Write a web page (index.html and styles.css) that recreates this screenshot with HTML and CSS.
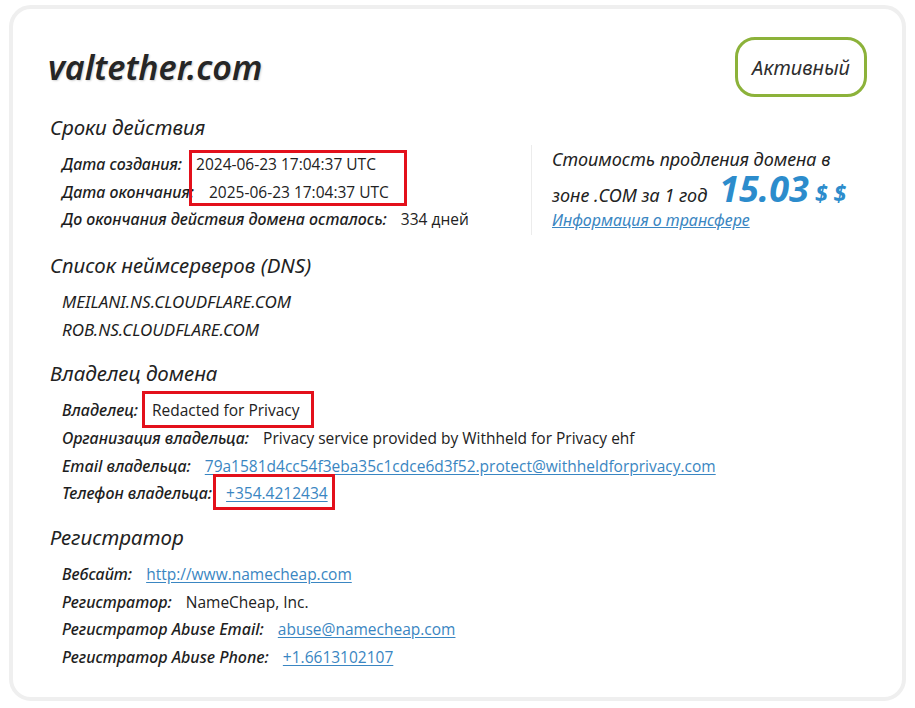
FILE: index.html
```html
<!DOCTYPE html>
<html lang="ru">
<head>
<meta charset="utf-8">
<title>valtether.com</title>
<link rel="stylesheet" href="styles.css">
</head>
<body>
<div class="wrap">
  <div class="card">
    <div class="head">
      <h1 class="domain">valtether.com</h1>
      <div class="badge">Активный</div>
    </div>

    <div class="sec sec-top">
      <div class="col-main">
        <h2 class="sec-title">Сроки действия</h2>
        <div class="rows">
          <div class="row"><span class="lbl">Дата создания:</span><span class="val">2024-06-23 17:04:37 UTC</span></div>
          <div class="row"><span class="lbl">Дата окончания:</span><span class="val val-shift">2025-06-23 17:04:37 UTC</span></div>
          <div class="row"><span class="lbl">До окончания действия домена осталось:</span><span class="val">334 дней</span></div>
          <div class="redbox redbox-dates"></div>
        </div>
      </div>
      <div class="price">
        <div class="price-line">Стоимость продления домена в</div>
        <div class="price-line price-line-big"><span>зоне .COM за 1 год</span><span class="amount">15.03</span><span class="cur">$ $</span></div>
        <a class="price-link" href="#">Информация о трансфере</a>
      </div>
    </div>

    <div class="sec">
      <h2 class="sec-title">Список неймсерверов (DNS)</h2>
      <div class="rows">
        <div class="row"><span class="ns">MEILANI.NS.CLOUDFLARE.COM</span></div>
        <div class="row"><span class="ns">ROB.NS.CLOUDFLARE.COM</span></div>
      </div>
    </div>

    <div class="sec">
      <h2 class="sec-title">Владелец домена</h2>
      <div class="rows">
        <div class="row"><span class="lbl">Владелец:</span><span class="val mark mark-owner">Redacted for Privacy</span></div>
        <div class="row"><span class="lbl">Организация владельца:</span><span class="val">Privacy service provided by Withheld for Privacy ehf</span></div>
        <div class="row"><span class="lbl">Email владельца:</span><a class="val link" href="#">79a1581d4cc54f3eba35c1cdce6d3f52.protect@withheldforprivacy.com</a></div>
        <div class="row"><span class="lbl">Телефон владельца:</span><a class="val link mark mark-phone" href="#">+354.4212434</a></div>
      </div>
    </div>

    <div class="sec">
      <h2 class="sec-title">Регистратор</h2>
      <div class="rows">
        <div class="row"><span class="lbl">Вебсайт:</span><a class="val link" href="#">http://www.namecheap.com</a></div>
        <div class="row"><span class="lbl">Регистратор:</span><span class="val">NameCheap, Inc.</span></div>
        <div class="row"><span class="lbl">Регистратор Abuse Email:</span><a class="val link" href="#">abuse@namecheap.com</a></div>
        <div class="row"><span class="lbl">Регистратор Abuse Phone:</span><a class="val link" href="#">+1.6613102107</a></div>
      </div>
    </div>
  </div>
</div>
</body>
</html>
```

FILE: styles.css
```css
* { box-sizing: border-box; }

html, body {
  margin: 0;
  padding: 0;
  background: #ffffff;
}

body {
  font-family: "Noto Sans", "Open Sans", sans-serif;
  color: #222222;
}

.wrap {
  padding: 5px 9px 7px 9px;
}

.card {
  height: 696px;
  border: 4px solid #efefef;
  border-radius: 22px;
  background: #ffffff;
  padding: 28px 35px 0 35px;
}

.head {
  display: flex;
  justify-content: space-between;
  align-items: center;
  height: 60px;
}

.domain {
  margin: 0;
  font-family: "Noto Sans", sans-serif;
  font-style: italic;
  font-weight: 600;
  font-size: 34px;
  line-height: 40px;
  color: #262626;
  text-shadow: 1px 1px 2px rgba(0, 0, 0, 0.18);
}

.badge {
  width: 132px;
  height: 60px;
  border: 3px solid #8cb23a;
  border-radius: 20px;
  display: flex;
  align-items: center;
  justify-content: center;
  font-style: italic;
  font-size: 20px;
  color: #2e2e2e;
}

.sec {
  margin-top: 15px;
}

.sec-top {
  display: grid;
  grid-template-columns: 483px 1fr;
}

.sec-title {
  margin: 0 0 8px 2px;
  font-style: italic;
  font-weight: 400;
  font-size: 20.5px;
  line-height: 30px;
  color: #222222;
}

.rows {
  position: relative;
  padding-left: 14px;
}

.row {
  height: 27.7px;
  display: flex;
  align-items: center;
  white-space: nowrap;
}

.lbl {
  font-style: italic;
  font-weight: 500;
  font-size: 16px;
  color: #1e1e1e;
  margin-right: 14px;
}

.ns {
  font-style: italic;
  font-size: 17px;
  color: #1e1e1e;
}

.val {
  font-family: "Open Sans", "Noto Sans", sans-serif;
  font-size: 15.5px;
  color: #222222;
}

.val-shift {
  margin-left: 1px;
}

.link {
  color: #3a86c2;
  text-decoration: underline;
  text-underline-offset: 2px;
}

.mark {
  position: relative;
}

.mark::after {
  content: "";
  position: absolute;
  border: 3px solid #e3101b;
}

.mark-owner::after {
  left: -10px;
  right: -14px;
  top: -8px;
  bottom: -7px;
}

.mark-phone::after {
  left: -13px;
  right: -7px;
  top: -8px;
  bottom: -6px;
}

.redbox {
  position: absolute;
  border: 3px solid #e3101b;
}

.redbox-dates {
  left: 141px;
  top: 0;
  width: 218px;
  height: 56px;
}

.price {
  margin-top: 33px;
  height: 90px;
  border-left: 1px solid #ececec;
  padding-left: 20px;
  font-style: italic;
  font-size: 18px;
  color: #222222;
}

.price-line {
  height: 29px;
  line-height: 29px;
  white-space: nowrap;
}

.price-line-big {
  display: flex;
  align-items: baseline;
  gap: 6px;
}

.amount {
  display: inline-block;
  margin-left: 6px;
  font-size: 36px;
  font-weight: 700;
  color: #2c8ccc;
  line-height: 29px;
}

.cur {
  display: inline-block;
  font-size: 23px;
  font-weight: 700;
  color: #2c8ccc;
  line-height: 29px;
}

.price-link {
  display: block;
  margin-top: 3px;
  line-height: 28px;
  font-size: 16px;
  color: #3a86c2;
  text-decoration: underline;
}
```
